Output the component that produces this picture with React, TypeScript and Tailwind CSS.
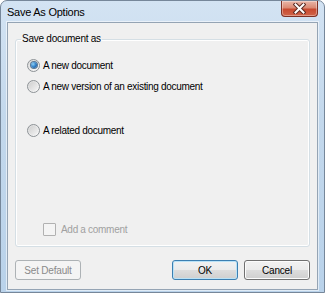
import React from "react";

const Radio = ({ checked, label }: { checked?: boolean; label: string }) => (
  <div className="flex items-center h-[14px] gap-[3px]">
    <span className="relative w-[13px] h-[13px] rounded-full border border-[#8d9296] bg-[linear-gradient(135deg,#dadada,#fbfbfb)] flex items-center justify-center">
      <span
        className={
          checked
            ? "w-[6px] h-[6px] rounded-full bg-[radial-gradient(circle_at_35%_35%,#8fd0f5,#2a78c2_55%,#1a4f86)] shadow-[0_0_0_1px_#5a7894]"
            : "w-[9px] h-[9px] rounded-full bg-[linear-gradient(135deg,#cfcfcf,#f4f4f4)]"
        }
      />
    </span>
    <span className="text-[10px] tracking-[-0.3px] text-black">{label}</span>
  </div>
);

const Button = ({
  label,
  primary,
  disabled,
}: {
  label: string;
  primary?: boolean;
  disabled?: boolean;
}) => (
  <button
    className={`w-[66px] h-[20px] rounded-[3px] border text-[10px] tracking-[-0.2px] flex items-center justify-center ${
      disabled
        ? "border-[#adb2b5] bg-[#f4f4f4] text-[#8a8a8a]"
        : primary
          ? "border-[#3c7fb1] bg-[linear-gradient(to_bottom,#f2f2f2_0%,#ebebeb_50%,#dddddd_50%,#cfcfcf_100%)] shadow-[inset_0_0_0_1px_#b9e2f7] text-black"
          : "border-[#707070] bg-[linear-gradient(to_bottom,#f2f2f2_0%,#ebebeb_50%,#dddddd_50%,#cfcfcf_100%)] shadow-[inset_0_0_0_1px_#fcfcfc] text-black"
    }`}
  >
    {label}
  </button>
);

export default function App() {
  return (
    <div
      className="w-[325px] h-[293px] flex flex-col rounded-t-[7px] border border-[#76879a] bg-[linear-gradient(to_bottom,#d3e3f3,#c3d8ec_40%,#b9d2ea)] px-[6px] pb-[2px]"
      style={{ fontFamily: '"Liberation Sans", Arial, sans-serif' }}
    >
      {/* Title bar */}
      <div className="h-[21px] flex justify-between">
        <span className="self-center text-[11px] tracking-[-0.25px] text-black mt-[1px]">
          Save As Options
        </span>
        <div className="w-[37px] h-[16px] rounded-b-[4px] border border-t-0 border-[#7d3024] bg-[linear-gradient(to_bottom,#e9b6a8_0%,#db8a74_45%,#c84a30_55%,#d0654a_100%)] shadow-[inset_0_0_0_1px_rgba(255,255,255,0.35)] flex items-center justify-center">
          <svg width="13" height="11" viewBox="0 0 13 11">
            <path d="M2.5 1.5 L10.5 9.5 M10.5 1.5 L2.5 9.5" stroke="#5a2a22" strokeWidth="4" strokeLinecap="square" />
            <path d="M2.5 1.5 L10.5 9.5 M10.5 1.5 L2.5 9.5" stroke="#ffffff" strokeWidth="2" strokeLinecap="square" />
          </svg>
        </div>
      </div>

      {/* Client area */}
      <div className="flex-1 flex flex-col bg-[#f0f0f0] border border-[#95a4b4] shadow-[0_0_0_1px_rgba(255,255,255,0.55)]">
        <fieldset className="flex-1 mt-[9px] mx-[7px] p-0 border border-[#d5dfe5] rounded-[3px] shadow-[inset_0_0_0_1px_#ffffff] flex flex-col">
          <legend className="ml-[5px] px-[1px] text-[10px] leading-[14px] tracking-[-0.25px] text-black">
            Save document as
          </legend>
          <div className="flex flex-col pl-[11px] pt-[12px]">
            <Radio checked label="A new document" />
            <div className="mt-[7px]">
              <Radio label="A new version of an existing document" />
            </div>
            <div className="mt-[30px]">
              <Radio label="A related document" />
            </div>
            <div className="mt-[85px] ml-[16px] flex items-center h-[14px] gap-[5px]">
              <span className="w-[13px] h-[13px] border border-[#b1b1b1] bg-[#f4f4f4] rounded-[1px]" />
              <span className="text-[10px] tracking-[-0.3px] text-[#a0a0a0]">Add a comment</span>
            </div>
          </div>
        </fieldset>

        <div className="flex items-center mt-[13px] mb-[9px] mx-[7px]">
          <Button label="Set Default" disabled />
          <div className="ml-auto flex gap-[6px]">
            <Button label="OK" primary />
            <Button label="Cancel" />
          </div>
        </div>
      </div>
    </div>
  );
}
